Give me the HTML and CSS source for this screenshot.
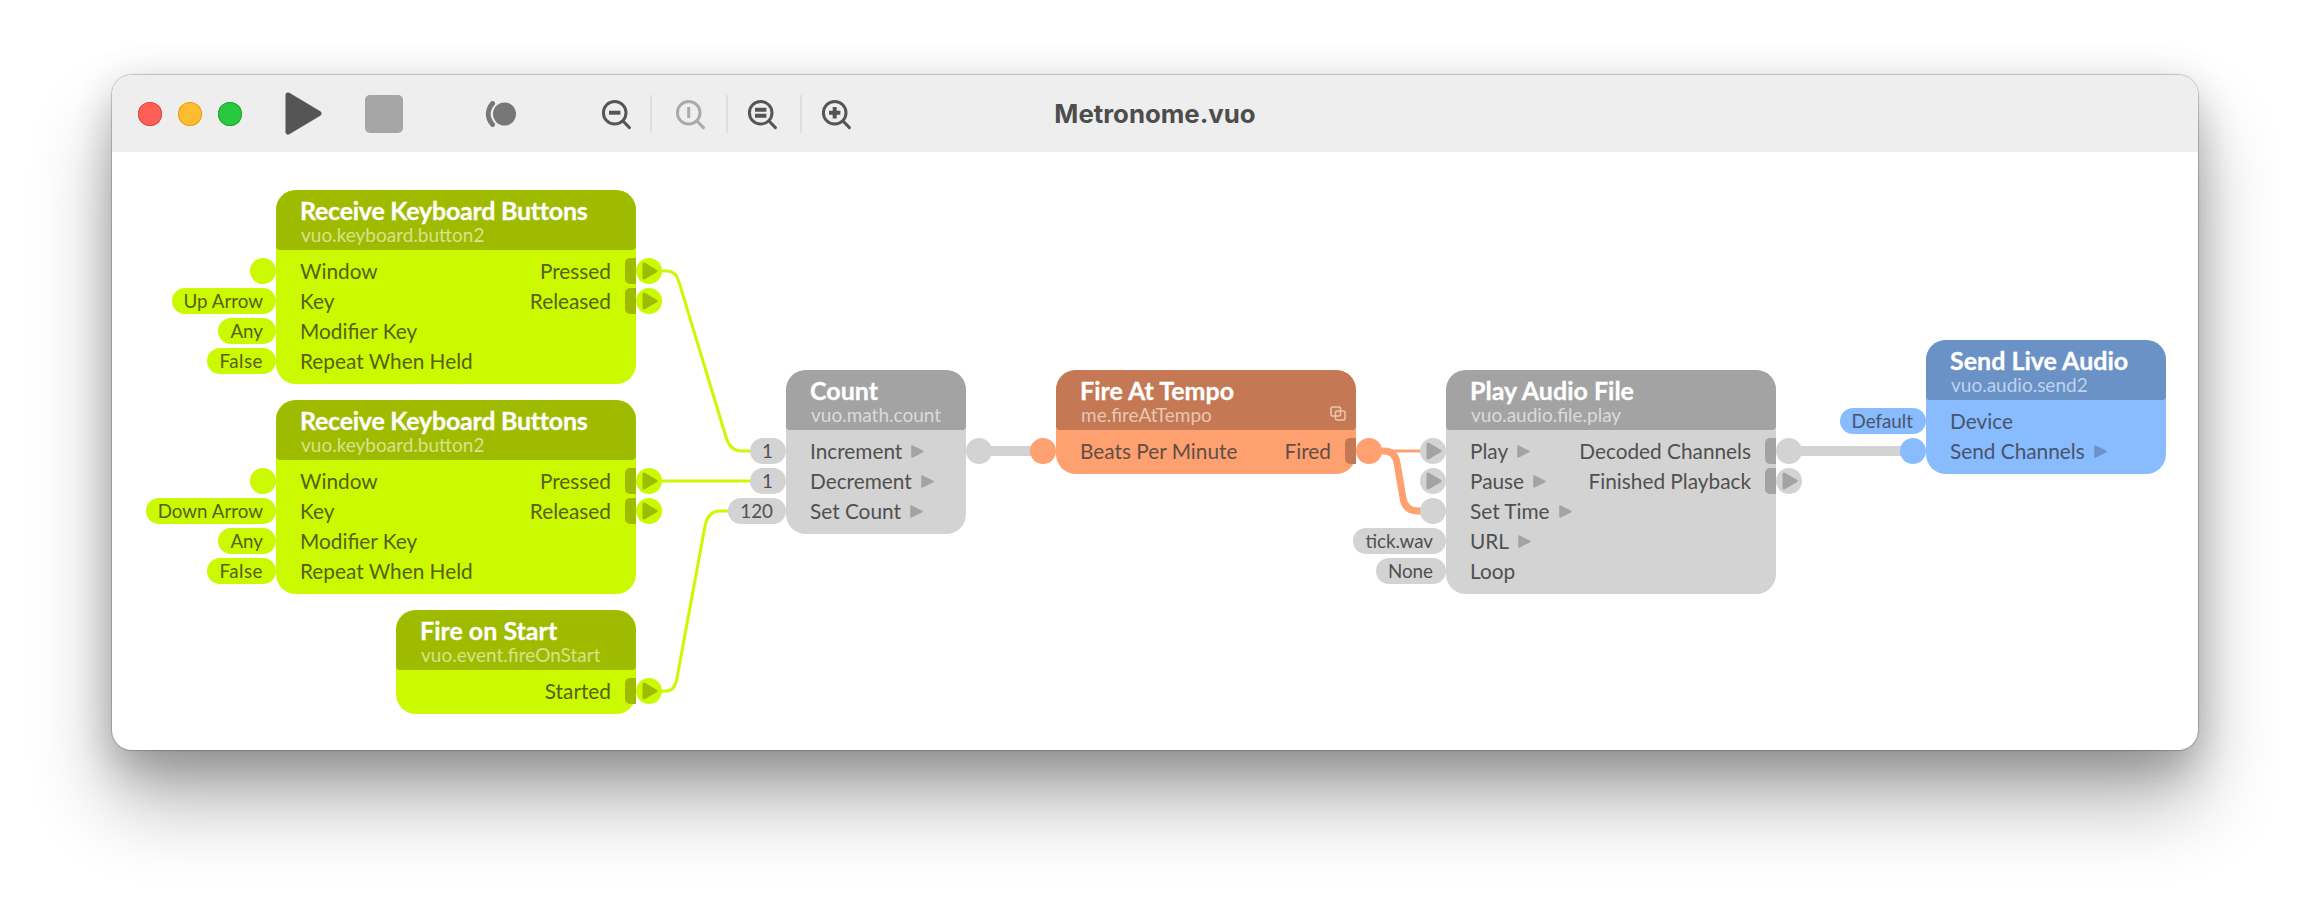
FILE: index.html
```html
<!DOCTYPE html>
<html lang="en">
<head>
<meta charset="utf-8">
<title>Metronome.vuo</title>
<link rel="stylesheet" href="styles.css">
</head>
<body>
<svg class="sprite" aria-hidden="true"><defs>
  <symbol id="t" viewBox="0 0 16 18"><polygon points="2,2 14,9 2,16" fill="currentColor" stroke="currentColor" stroke-width="3" stroke-linejoin="round"/></symbol>
  <symbol id="s" viewBox="0 0 13 13"><polygon points="1,1 12,6.5 1,12" fill="currentColor" stroke="currentColor" stroke-width="1.5" stroke-linejoin="round"/></symbol>
  <symbol id="lens" viewBox="0 0 32 32"><circle cx="13.7" cy="13.7" r="11.3" fill="none" stroke="currentColor" stroke-width="3"/><path d="M22 22 L28.4 28.6" fill="none" stroke="currentColor" stroke-width="3" stroke-linecap="round"/></symbol>
</defs></svg>
<main class="window">
  <header class="titlebar">
    <div class="lights"><span class="light l-close"></span><span class="light l-min"></span><span class="light l-max"></span></div>
    <svg class="play" viewBox="0 0 37 43"><path d="M3 3 L34 21.5 L3 40 Z" fill="#555" stroke="#555" stroke-width="5" stroke-linejoin="round"/></svg>
    <span class="stop"></span>
    <svg class="record" viewBox="0 0 32 26"><circle cx="19.5" cy="13" r="11.5" fill="#777"/><path d="M7.5 2.5 C2 9 2 17 7.5 23.5" fill="none" stroke="#777" stroke-width="5" stroke-linecap="round"/></svg>
    <div class="zooms">
      <svg class="zoom" viewBox="0 0 32 32"><use href="#lens"/><path class="glyph" d="M8 13.7 H19.4"/></svg>
      <i class="sep"></i>
      <svg class="zoom off" viewBox="0 0 32 32"><use href="#lens"/><path class="glyph thin" d="M13.7 8 V19"/></svg>
      <i class="sep"></i>
      <svg class="zoom" viewBox="0 0 32 32"><use href="#lens"/><path class="glyph" d="M8 10.7 H19.4 M8 16.7 H19.4"/></svg>
      <i class="sep"></i>
      <svg class="zoom" viewBox="0 0 32 32"><use href="#lens"/><path class="glyph" d="M8 13.7 H19.4 M13.7 8 V19.4"/></svg>
    </div>
    <h1 class="title">Metronome.vuo</h1>
  </header>
  <section class="canvas">
    <svg class="cables" viewBox="112 152 2086 598" fill="none" stroke-linecap="butt">
      <path class="c-green" d="M660 271 H667 Q676 271 679 282 L726 437 Q730 451 742 451 H752"/>
      <path class="c-green" d="M660 481 H752"/>
      <path class="c-green" d="M660 691 H666 Q675 691 677 678 L705 526 Q708 511 720 511 H732"/>
      <path class="c-gray" d="M985 451 H1035"/>
      <path class="c-gray" d="M1795 451 H1905"/>
      <path class="c-thin" d="M1378 451 H1424"/>
      <path class="c-thick" d="M1378 451 H1384 Q1395 451 1397 463 L1403 498 Q1405 511 1418 511 H1424"/>
    </svg>

    <article class="node green n-kb1">
      <div class="head"><div class="name tight">Receive Keyboard Buttons</div><div class="cls">vuo.keyboard.button2</div></div>
      <div class="body">
        <div class="row"><span class="dot in"></span><span>Window</span><span class="right">Pressed</span><i class="tab"></i><span class="dot out"><svg class="tp"><use href="#t"/></svg></span></div>
        <div class="row"><span class="pill">Up Arrow</span><span>Key</span><span class="right">Released</span><i class="tab"></i><span class="dot out"><svg class="tp"><use href="#t"/></svg></span></div>
        <div class="row"><span class="pill">Any</span><span>Modifier Key</span></div>
        <div class="row"><span class="pill wide">False</span><span>Repeat When Held</span></div>
      </div>
    </article>

    <article class="node green n-kb2">
      <div class="head"><div class="name tight">Receive Keyboard Buttons</div><div class="cls">vuo.keyboard.button2</div></div>
      <div class="body">
        <div class="row"><span class="dot in"></span><span>Window</span><span class="right">Pressed</span><i class="tab"></i><span class="dot out"><svg class="tp"><use href="#t"/></svg></span></div>
        <div class="row"><span class="pill">Down Arrow</span><span>Key</span><span class="right">Released</span><i class="tab"></i><span class="dot out"><svg class="tp"><use href="#t"/></svg></span></div>
        <div class="row"><span class="pill">Any</span><span>Modifier Key</span></div>
        <div class="row"><span class="pill wide">False</span><span>Repeat When Held</span></div>
      </div>
    </article>

    <article class="node green n-start">
      <div class="head"><div class="name">Fire on Start</div><div class="cls">vuo.event.fireOnStart</div></div>
      <div class="body">
        <div class="row"><span class="right">Started</span><i class="tab"></i><span class="dot out"><svg class="tp"><use href="#t"/></svg></span></div>
      </div>
    </article>

    <article class="node gray n-count">
      <div class="head"><div class="name">Count</div><div class="cls">vuo.math.count</div></div>
      <div class="body">
        <div class="row"><span class="pill">1</span><span>Increment</span><svg class="ts"><use href="#s"/></svg><span class="dot out"></span></div>
        <div class="row"><span class="pill">1</span><span>Decrement</span><svg class="ts"><use href="#s"/></svg></div>
        <div class="row"><span class="pill">120</span><span>Set Count</span><svg class="ts"><use href="#s"/></svg></div>
      </div>
    </article>

    <article class="node orange n-tempo">
      <div class="head">
        <div class="name">Fire At Tempo</div><div class="cls">me.fireAtTempo</div>
        <svg class="copy" viewBox="0 0 16 15"><rect x="1" y="1" width="9.5" height="9" rx="1.5"/><rect x="5.5" y="5" width="9.5" height="9" rx="1.5"/></svg>
      </div>
      <div class="body">
        <div class="row"><span class="dot in"></span><span>Beats Per Minute</span><span class="right">Fired</span><i class="tab"></i><span class="dot out"></span></div>
      </div>
    </article>

    <article class="node gray n-play">
      <div class="head"><div class="name">Play Audio File</div><div class="cls">vuo.audio.file.play</div></div>
      <div class="body">
        <div class="row"><span class="dot in"><svg class="tp"><use href="#t"/></svg></span><span>Play</span><svg class="ts"><use href="#s"/></svg><span class="right">Decoded Channels</span><i class="tab"></i><span class="dot out"></span></div>
        <div class="row"><span class="dot in"><svg class="tp"><use href="#t"/></svg></span><span>Pause</span><svg class="ts"><use href="#s"/></svg><span class="right">Finished Playback</span><i class="tab"></i><span class="dot out"><svg class="tp"><use href="#t"/></svg></span></div>
        <div class="row"><span class="dot in"></span><span>Set Time</span><svg class="ts"><use href="#s"/></svg></div>
        <div class="row"><span class="pill">tick.wav</span><span>URL</span><svg class="ts"><use href="#s"/></svg></div>
        <div class="row"><span class="pill">None</span><span>Loop</span></div>
      </div>
    </article>

    <article class="node blue n-send">
      <div class="head"><div class="name">Send Live Audio</div><div class="cls">vuo.audio.send2</div></div>
      <div class="body">
        <div class="row"><span class="pill">Default</span><span>Device</span></div>
        <div class="row"><span class="dot in"></span><span>Send Channels</span><svg class="ts"><use href="#s"/></svg></div>
      </div>
    </article>
  </section>
</main>
</body>
</html>
```
FILE: styles.css
```css
* { box-sizing: border-box; }
html, body { margin: 0; height: 100%; }
body { background: #fff; overflow: hidden; padding: 75px 0 0 112px; font-family: "Lato", "Noto Sans", sans-serif; }
.sprite { display: none; }

.window {
  width: 2086px; height: 675px; border-radius: 20px; background: #fff;
  display: flex; flex-direction: column;
  box-shadow: 0 0 1px 1px rgba(0,0,0,.2), 0 52px 80px rgba(0,0,0,.3), 0 22px 40px rgba(0,0,0,.17), 0 0 44px rgba(0,0,0,.07);
}
.titlebar {
  flex: none; height: 77px; background: #eeeeee; border-radius: 20px 20px 0 0;
  display: flex; align-items: center; position: relative;
}
.lights { display: flex; gap: 16px; margin-left: 26px; }
.light { width: 24px; height: 24px; border-radius: 50%; }
.l-close { background: #ff5f57; box-shadow: inset 0 0 0 1px #e0443e; }
.l-min { background: #febc2e; box-shadow: inset 0 0 0 1px #dea123; }
.l-max { background: #28c840; box-shadow: inset 0 0 0 1px #1aab29; }
.play { width: 37px; height: 43px; margin-left: 43px; }
.stop { width: 38px; height: 38px; border-radius: 5px; background: #a6a6a6; margin-left: 43px; }
.record { width: 32px; height: 26px; margin-left: 82px; }
.zooms { display: flex; align-items: center; margin-left: 84px; }
.zoom { width: 32px; height: 32px; color: #555; margin-top: 3px; }
.zoom.off { color: #aaa; }
.glyph { fill: none; stroke: currentColor; stroke-width: 4; }
.glyph.thin { stroke-width: 3; }
.sep { width: 2px; height: 38px; background: #dedede; margin: 0 19px; }
.sep:nth-of-type(1) { margin: 0 23px 0 17px; }
.sep:nth-of-type(3) { margin: 0 19px 0 21px; }
.title {
  position: absolute; left: 0; right: 0; top: 0; margin: 0; text-align: center;
  font: 700 25.8px/77px "Inter", sans-serif; color: #4d4d4d; pointer-events: none;
}

.canvas { flex: 1; position: relative; border-radius: 0 0 20px 20px; }
.cables { position: absolute; left: 0; top: 0; width: 2086px; height: 598px; }
.c-green { stroke: #cbf900; stroke-width: 3; }
.c-gray { stroke: #d3d3d3; stroke-width: 10; }
.c-thin { stroke: #ffa070; stroke-width: 3; }
.c-thick { stroke: #ffa070; stroke-width: 7; }

.node { position: absolute; border-radius: 20px; background: var(--body); color: var(--text); }
.green { --body: #cbf900; --head: #9fbb00; --text: #566117; --sub: #d6e38c; }
.gray { --body: #d3d3d3; --head: #a3a3a3; --text: #505050; --sub: #dbdbdb; }
.orange { --body: #ffa070; --head: #c47853; --text: #5f4f47; --sub: #e8c7b5; }
.blue { --body: #89bbff; --head: #6a92c6; --text: #48546a; --sub: #bdd3ef; }

.n-kb1 { left: 164px; top: 38px; width: 360px; }
.n-kb2 { left: 164px; top: 248px; width: 360px; }
.n-start { left: 284px; top: 458px; width: 240px; }
.n-count { left: 674px; top: 218px; width: 180px; }
.n-tempo { left: 944px; top: 218px; width: 300px; }
.n-play { left: 1334px; top: 218px; width: 330px; }
.n-send { left: 1814px; top: 188px; width: 240px; }

.head {
  position: relative; height: 60px; background: var(--head); border-radius: 20px 20px 4px 4px;
  padding: 6px 0 0 24px;
}
.name { font-size: 25px; font-weight: 700; line-height: 28px; color: #fff; white-space: nowrap; -webkit-text-stroke: .3px #fff; }
.name.tight { letter-spacing: -.25px; }
.cls { font-size: 19px; line-height: 20px; margin: 1px 0 0 1px; color: var(--sub); white-space: nowrap; }
.copy { position: absolute; right: 10px; top: 36px; width: 16px; height: 15px; fill: none; stroke: var(--sub); stroke-width: 1.5; }

.body { padding: 6px 0 8px; }
.row {
  position: relative; height: 30px; display: flex; align-items: center;
  padding: 0 25px 2px 24px; font-size: 20.8px; white-space: nowrap;
}
.right { margin-left: auto; }
.ts { width: 13px; height: 13px; margin: 2px 0 0 9px; color: var(--head); }
.tab { position: absolute; right: 0; top: 2px; width: 11px; height: 26px; background: var(--head); border-radius: 5px 0 0 5px; }
.dot {
  position: absolute; top: 2px; width: 26px; height: 26px; border-radius: 50%; background: var(--body);
  display: flex; align-items: center; justify-content: center; color: var(--head);
}
.dot.in { right: 100%; }
.dot.out { left: 100%; }
.tp { width: 16px; height: 18px; margin-left: 2px; }
.pill {
  position: absolute; right: 100%; top: 2px; height: 26px; border-radius: 13px; background: var(--body);
  padding: 0 13px 0 12px; font-size: 18.8px; line-height: 26px;
}
.pill.wide { letter-spacing: .5px; }
```
